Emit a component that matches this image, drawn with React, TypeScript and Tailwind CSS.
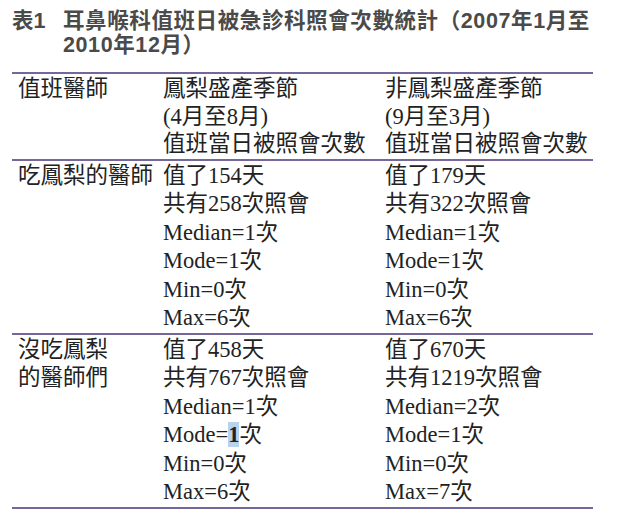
const cellFont = {
  fontFamily: '"Liberation Serif", "Noto Sans CJK TC", serif',
};

type Row = {
  label: string[];
  a: React.ReactNode[];
  b: React.ReactNode[];
};

const rows: Row[] = [
  {
    label: ["吃鳳梨的醫師"],
    a: ["值了154天", "共有258次照會", "Median=1次", "Mode=1次", "Min=0次", "Max=6次"],
    b: ["值了179天", "共有322次照會", "Median=1次", "Mode=1次", "Min=0次", "Max=6次"],
  },
  {
    label: ["沒吃鳳梨", "的醫師們"],
    a: [
      "值了458天",
      "共有767次照會",
      "Median=1次",
      <>
        Mode=<span className="bg-[#b9d3ee] font-bold">1</span>次
      </>,
      "Min=0次",
      "Max=6次",
    ],
    b: ["值了670天", "共有1219次照會", "Median=2次", "Mode=1次", "Min=0次", "Max=7次"],
  },
];

const Lines = ({ items }: { items: React.ReactNode[] }) => (
  <div className="flex flex-col">
    {items.map((t, i) => (
      <div key={i} className="h-[28.5px] leading-[28.5px] whitespace-nowrap">
        {t}
      </div>
    ))}
  </div>
);

export default function App() {
  return (
    <div className="w-[640px] h-[524px] bg-white overflow-hidden">
      <div
        className="flex pl-3 pt-[9px] text-[21.5px] leading-[24px] font-bold tracking-[0.6px] text-[#4a4a4a]"
        style={{ fontFamily: '"Liberation Sans", "Noto Sans CJK TC", sans-serif' }}
      >
        <span className="w-[51px] shrink-0 tracking-normal">表1</span>
        <span className="w-[540px]">
          耳鼻喉科值班日被急診科照會次數統計（2007年1月至2010年12月）
        </span>
      </div>

      <div className="ml-3 mt-[15px] w-[581px] text-[22.5px] text-[#222]" style={cellFont}>
        <div className="grid grid-cols-[145px_222px_1fr] border-t-2 border-b-2 border-[#75679a] pl-[6px] py-[1px]">
          <div className="leading-[27.5px]">值班醫師</div>
          <div className="leading-[27.5px]">
            <div>鳳梨盛產季節</div>
            <div>(4月至8月)</div>
            <div>值班當日被照會次數</div>
          </div>
          <div className="leading-[27.5px]">
            <div>非鳳梨盛產季節</div>
            <div>(9月至3月)</div>
            <div>值班當日被照會次數</div>
          </div>
        </div>
        {rows.map((r, i) => (
          <div
            key={i}
            className="grid grid-cols-[145px_222px_1fr] border-b-2 border-[#75679a] pl-[6px] pt-[1px]"
          >
            <Lines items={r.label} />
            <Lines items={r.a} />
            <Lines items={r.b} />
          </div>
        ))}
      </div>
    </div>
  );
}
